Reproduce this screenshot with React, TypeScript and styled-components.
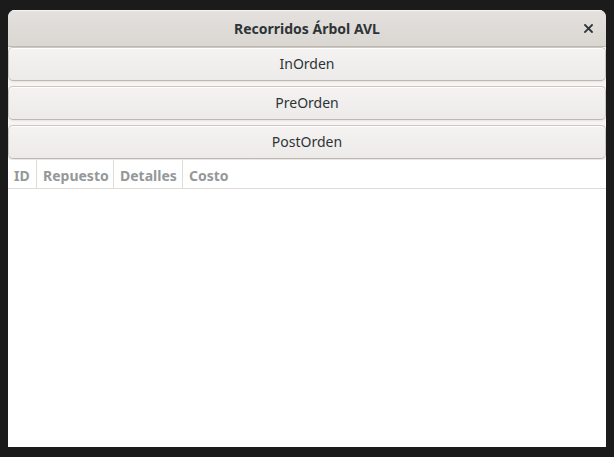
import React from "react";
import styled, { createGlobalStyle } from "styled-components";

const Global = createGlobalStyle`
  html, body { margin: 0; padding: 0; background: #1b1b1b; }
  body { font-family: "Noto Sans", "Open Sans", sans-serif; }
  #root { padding: 10px 8px 0 8px; }
`;

const Window = styled.div`
  width: 598px;
  height: 437px;
  background: #ffffff;
  border-radius: 7px 7px 0 0;
  overflow: hidden;
  display: flex;
  flex-direction: column;
`;

const HeaderBar = styled.div`
  height: 36px;
  flex: none;
  background: linear-gradient(#e4e1de, #dad6d2);
  border-bottom: 1px solid #bfb8b1;
  box-shadow: inset 0 1px #f6f5f4;
  display: flex;
  align-items: center;
  justify-content: center;
  position: relative;
`;

const Title = styled.div`
  font-weight: bold;
  font-size: 14px;
  color: #2e3436;
`;

const Close = styled.button`
  position: absolute;
  right: 9px;
  top: 9px;
  width: 18px;
  height: 18px;
  padding: 0;
  border: none;
  background: none;
  display: flex;
  align-items: center;
  justify-content: center;
`;

const Content = styled.div`
  flex: 1;
  display: flex;
  flex-direction: column;
  background: #f6f5f4;
`;

const Buttons = styled.div`
  display: flex;
  flex-direction: column;
  gap: 5px;
  background: #f6f5f4;
`;

const Btn = styled.button`
  height: 34px;
  margin: 0;
  border: 1px solid #cdc7c2;
  border-bottom-color: #bfb8b1;
  border-radius: 5px;
  background: linear-gradient(#f4f3f2, #edebe9);
  box-shadow: inset 0 1px #ffffff, 0 1px 2px rgba(0, 0, 0, 0.07);
  font-family: "Noto Sans", "Open Sans", sans-serif;
  font-size: 14px;
  color: #2e3436;
  padding: 0 0 2px 0;
`;

const Table = styled.div`
  flex: 1;
  background: #ffffff;
  margin-top: 1px;
`;

const HeaderRow = styled.div`
  height: 28px;
  display: flex;
  border-bottom: 1px solid #dfdcd8;
`;

const Col = styled.div<{ $w: number; $last?: boolean }>`
  width: ${(p) => p.$w}px;
  box-sizing: border-box;
  padding-left: 6px;
  padding-top: 2px;
  display: flex;
  align-items: center;
  font-weight: bold;
  font-size: 14px;
  color: #959899;
  border-right: ${(p) => (p.$last ? "none" : "1px solid #dfdcd8")};
`;

export default function App() {
  return (
    <>
      <Global />
      <Window>
        <HeaderBar>
          <Title>Recorridos Árbol AVL</Title>
          <Close aria-label="Cerrar">
            <svg width="9" height="9" viewBox="0 0 9 9">
              <path d="M1 1 L8 8 M8 1 L1 8" stroke="#2e3436" strokeWidth="1.8" strokeLinecap="square" />
            </svg>
          </Close>
        </HeaderBar>
        <Content>
          <Buttons>
            <Btn>InOrden</Btn>
            <Btn>PreOrden</Btn>
            <Btn>PostOrden</Btn>
          </Buttons>
          <Table>
            <HeaderRow>
              <Col $w={29}>ID</Col>
              <Col $w={77}>Repuesto</Col>
              <Col $w={69}>Detalles</Col>
              <Col $w={80} $last>Costo</Col>
            </HeaderRow>
          </Table>
        </Content>
      </Window>
    </>
  );
}
